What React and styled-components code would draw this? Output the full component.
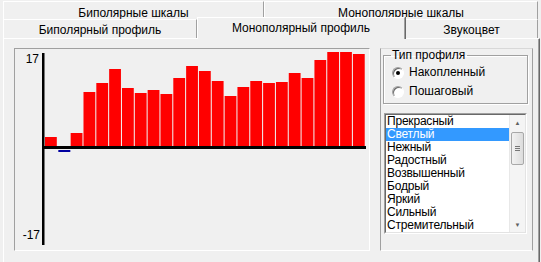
import React from 'react';
import styled, { createGlobalStyle } from 'styled-components';

const GlobalStyle = createGlobalStyle`
  html, body {
    margin: 0;
    padding: 0;
    background: #f0f0f0;
  }
  body {
    font-family: "Liberation Sans", Arial, sans-serif;
    font-size: 12px;
    color: #000;
  }
`;

const Window = styled.div`
  width: 541px;
  height: 262px;
  overflow: hidden;
  background: #f0f0f0;
`;

const TabRow = styled.div`
  display: flex;
  padding-left: 3px;
  padding-top: ${props => (props.top ? '1px' : '0')};
  height: ${props => (props.top ? '18px' : '19px')};
`;

const Tab = styled.div`
  box-sizing: border-box;
  flex: 0 0 ${props => props.w}px;
  height: ${props => (props.active ? '22px' : '100%')};
  margin-top: ${props => (props.active ? '-2px' : '0')};
  position: relative;
  z-index: ${props => (props.active ? 1 : 0)};
  background: #f0f0f0;
  border-top: 1px solid #fff;
  border-left: 1px solid #fff;
  border-right: 1px solid #a0a0a0;
  box-shadow: ${props => (props.active ? '1px 0 0 #696969' : 'none')};
  display: flex;
  justify-content: center;
  padding-top: ${props => (props.top ? '5px' : '4px')};
  line-height: 13px;
  white-space: nowrap;
`;

const Panel = styled.div`
  box-sizing: border-box;
  margin-left: 3px;
  width: 537px;
  height: 230px;
  border-top: 1px solid #fff;
  border-left: 1px solid #fff;
  border-right: 1px solid #696969;
  box-shadow: inset -1px 0 0 #a0a0a0;
  display: flex;
  gap: 10px;
  padding: 9px 0 0 10px;
`;

const ChartFrame = styled.div`
  box-sizing: border-box;
  flex: 0 0 356px;
  height: 203px;
  border-top: 1px solid #a0a0a0;
  border-left: 1px solid #a0a0a0;
  border-right: 1px solid #fff;
  border-bottom: 1px solid #fff;
  svg {
    display: block;
  }
`;

const SidePanel = styled.div`
  box-sizing: border-box;
  flex: 0 0 153px;
  height: 203px;
  border-top: 1px solid #d8d8d8;
  border-left: 1px solid #a0a0a0;
  border-right: 1px solid #a0a0a0;
  border-bottom: 1px solid #fff;
  display: flex;
  flex-direction: column;
  padding: 0 4px 0 2px;
`;

const GroupBox = styled.fieldset`
  box-sizing: border-box;
  margin: 0;
  height: 55px;
  padding: 1px 0 0 8px;
  border: 1px solid #a0a0a0;
  box-shadow: 1px 1px 0 #fff, inset 1px 1px 0 #fff;
  legend {
    padding: 0 2px 0 1px;
    margin-left: -1px;
    line-height: 13px;
  }
`;

const RadioRow = styled.label`
  display: flex;
  align-items: center;
  gap: 5px;
  height: 19px;
  line-height: 13px;
`;

const RadioDot = styled.span`
  box-sizing: border-box;
  width: 12px;
  height: 12px;
  border-radius: 50%;
  background: #fff;
  border: 1px solid;
  border-color: #a0a0a0 #fff #fff #a0a0a0;
  box-shadow: inset 1px 1px 0 #696969;
  display: flex;
  align-items: center;
  justify-content: center;
  &::after {
    content: '';
    width: 4px;
    height: 4px;
    border-radius: 50%;
    background: ${props => (props.checked ? '#000' : 'transparent')};
  }
`;

const ListBox = styled.div`
  box-sizing: border-box;
  margin-top: 9px;
  margin-left: 1px;
  width: 143px;
  height: 121px;
  border: 1px solid;
  border-color: #a0a0a0 #fff #fff #a0a0a0;
  display: flex;
`;

const ListInner = styled.div`
  flex: 1;
  display: flex;
  border: 1px solid;
  border-color: #696969 #e3e3e3 #e3e3e3 #696969;
  background: #fff;
  overflow: hidden;
`;

const Items = styled.div`
  flex: 1;
  overflow: hidden;
`;

const Item = styled.div`
  height: 13px;
  line-height: 13px;
  padding-left: 1px;
  letter-spacing: -0.2px;
  white-space: nowrap;
  background: ${props => (props.selected ? '#3399ff' : 'transparent')};
  color: ${props => (props.selected ? '#fff' : '#000')};
`;

const ScrollBar = styled.div`
  width: 15px;
  background: #f4f4f4;
  border-left: 1px solid #e8e8e8;
  display: flex;
  flex-direction: column;
  align-items: center;
`;

const Arrow = styled.div`
  height: 15px;
  display: flex;
  align-items: center;
  justify-content: center;
  color: #606060;
  font-size: 6px;
`;

const Thumb = styled.div`
  box-sizing: border-box;
  margin-top: 2px;
  width: 13px;
  height: 33px;
  border: 1px solid #a8a8a8;
  border-radius: 2px;
  background: linear-gradient(to right, #f2f2f2, #dcdcdc);
  display: flex;
  flex-direction: column;
  align-items: center;
  justify-content: center;
  gap: 1px;
  span {
    width: 5px;
    height: 1px;
    background: #777;
  }
`;

const Track = styled.div`
  flex: 1;
`;

// bar tops in page pixels, 0 means the small negative stub
const tops = [137, 0, 133, 92, 83, 69, 88, 93, 90, 94, 78, 66, 71, 81, 96, 87, 81, 83, 82, 73, 78, 60, 52, 52, 54];
const ZERO = 146;

function Chart() {
  return (
    <svg width="354" height="201" viewBox="15 49 354 201">
      {tops.map((t, i) => {
        const x = 45 + i * 12.83;
        if (!t) {
          return <rect key={i} x={x + 0.5} y={150} width={12} height={2} fill="#0000a0" />;
        }
        return <rect key={i} x={x} y={t} width={11.8} height={ZERO - t} fill="#ff0000" />;
      })}
      <rect x="42" y="146" width="324" height="3" fill="#000" />
      <rect x="42" y="53" width="2.5" height="192" fill="#000" />
      <text x="39" y="63" textAnchor="end" fontFamily="Liberation Sans, Arial, sans-serif" fontSize="12">17</text>
      <text x="40" y="239" textAnchor="end" fontFamily="Liberation Sans, Arial, sans-serif" fontSize="12">-17</text>
    </svg>
  );
}

const words = ['Прекрасный', 'Светлый', 'Нежный', 'Радостный', 'Возвышенный', 'Бодрый', 'Яркий', 'Сильный', 'Стремительный'];

export default function App() {
  return (
    <Window>
      <GlobalStyle />
      <TabRow top>
        <Tab top w={261}>Биполярные шкалы</Tab>
        <Tab top w={274}>Монополярные шкалы</Tab>
      </TabRow>
      <TabRow>
        <Tab w={194}>Биполярный профиль</Tab>
        <Tab w={208} active>Монополярный профиль</Tab>
        <Tab w={133}>Звукоцвет</Tab>
      </TabRow>
      <Panel>
        <ChartFrame>
          <Chart />
        </ChartFrame>
        <SidePanel>
          <GroupBox>
            <legend>Тип профиля</legend>
            <RadioRow>
              <RadioDot checked />
              Накопленный
            </RadioRow>
            <RadioRow>
              <RadioDot />
              Пошаговый
            </RadioRow>
          </GroupBox>
          <ListBox>
            <ListInner>
              <Items>
                {words.map((w, i) => (
                  <Item key={w} selected={i === 1}>{w}</Item>
                ))}
              </Items>
              <ScrollBar>
                <Arrow>▲</Arrow>
                <Thumb><span /><span /><span /></Thumb>
                <Track />
                <Arrow>▼</Arrow>
              </ScrollBar>
            </ListInner>
          </ListBox>
        </SidePanel>
      </Panel>
    </Window>
  );
}
